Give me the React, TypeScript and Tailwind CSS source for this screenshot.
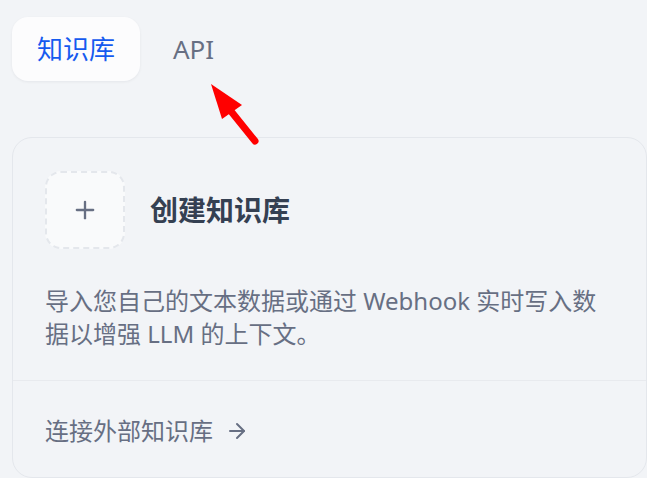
import { Plus, ArrowRight } from 'lucide-react';

const font = { fontFamily: '"Noto Sans", "Noto Sans CJK SC", sans-serif' };

export default function App() {
  return (
    <div
      className="relative min-h-screen w-full overflow-hidden bg-[#f2f4f7] px-3 pt-[17px]"
      style={font}
    >
      {/* Tabs */}
      <div className="flex items-center gap-[33px]">
        <div className="flex h-16 w-32 items-center justify-center rounded-2xl bg-[#fcfcfd] shadow-[0_1px_3px_rgba(16,24,40,0.06)]">
          <span className="text-[26px] text-[#155aef]">知识库</span>
        </div>
        <span className="text-[26px] text-[#676f83]">API</span>
      </div>

      {/* Create card */}
      <div className="mt-14 -mr-3 rounded-[20px] border border-[#e4e7ec] bg-[#f2f4f7]">
        <div className="px-[32px] pt-[33px]">
          <div className="flex items-center gap-[25px]">
            <div className="flex h-[78px] w-20 items-center justify-center rounded-2xl border-2 border-dashed border-[#e4e7ec] bg-[#f9fafb]">
              <Plus className="h-7 w-7 text-[#676f83]" strokeWidth={2} />
            </div>
            <span className="text-[28px] font-bold text-[#354052]">创建知识库</span>
          </div>
          <p className="mt-[35px] text-[24px] leading-[33px] text-[#676f83]">
            导入您自己的文本数据或通过 Webhook 实时写入数据以增强 LLM 的上下文。
          </p>
        </div>
        <div className="mt-[30px] h-px bg-[#e8eaee]" />
        <div className="flex items-center gap-3 px-[32px] pt-[33px] pb-[30px]">
          <span className="text-[24px] leading-[33px] text-[#676f83]">连接外部知识库</span>
          <ArrowRight className="h-6 w-6 text-[#676f83]" strokeWidth={2} />
        </div>
      </div>

      {/* Annotation arrow */}
      <svg className="pointer-events-none absolute left-0 top-0" width="647" height="478">
        <line x1="230" y1="110" x2="255" y2="141" stroke="#ff0000" strokeWidth="7" strokeLinecap="round" />
        <polygon points="211,84 242,105 222,119" fill="#ff0000" />
      </svg>
    </div>
  );
}
